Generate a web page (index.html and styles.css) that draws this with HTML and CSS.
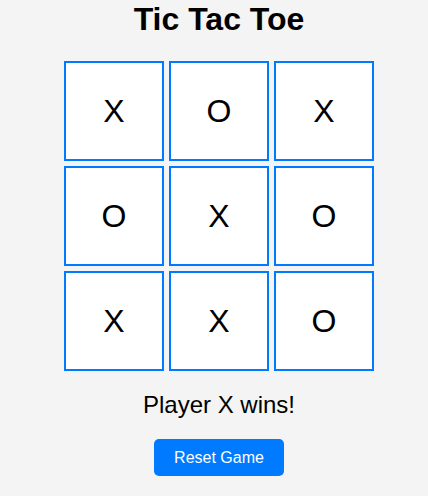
FILE: index.html
```html
<!DOCTYPE html>
<html lang="en">
<head>
<meta charset="utf-8">
<title>Tic Tac Toe</title>
<link rel="stylesheet" href="styles.css">
</head>
<body>
<main class="game">
  <h1 class="title">Tic Tac Toe</h1>
  <div class="board">
    <div class="cell">X</div>
    <div class="cell">O</div>
    <div class="cell">X</div>
    <div class="cell">O</div>
    <div class="cell">X</div>
    <div class="cell">O</div>
    <div class="cell">X</div>
    <div class="cell">X</div>
    <div class="cell">O</div>
  </div>
  <p class="status">Player X wins!</p>
  <button class="reset">Reset Game</button>
</main>
</body>
</html>
```
FILE: styles.css
```css
html, body {
  margin: 0;
  padding: 0;
  background: #f4f4f4;
}
body {
  font-family: "Liberation Sans", Arial, sans-serif;
  color: #000;
}
.game {
  display: flex;
  flex-direction: column;
  align-items: center;
  padding-left: 10px;
}
.title {
  font-size: 32px;
  font-weight: bold;
  margin: 1px 0 24px;
  line-height: 36px;
}
.board {
  display: grid;
  grid-template-columns: repeat(3, 100px);
  grid-template-rows: repeat(3, 100px);
  gap: 5px;
}
.cell {
  box-sizing: border-box;
  width: 100px;
  height: 100px;
  border: 2px solid #007bff;
  background: #fff;
  display: flex;
  align-items: center;
  justify-content: center;
  font-size: 32px;
}
.status {
  font-size: 24px;
  margin: 20px 0 20px;
  line-height: 28px;
}
.reset {
  font-family: "Liberation Sans", Arial, sans-serif;
  font-size: 16px;
  color: #fff;
  background: #007bff;
  border: none;
  border-radius: 5px;
  width: 130px;
  height: 37px;
  padding: 0;
  cursor: pointer;
}
```
